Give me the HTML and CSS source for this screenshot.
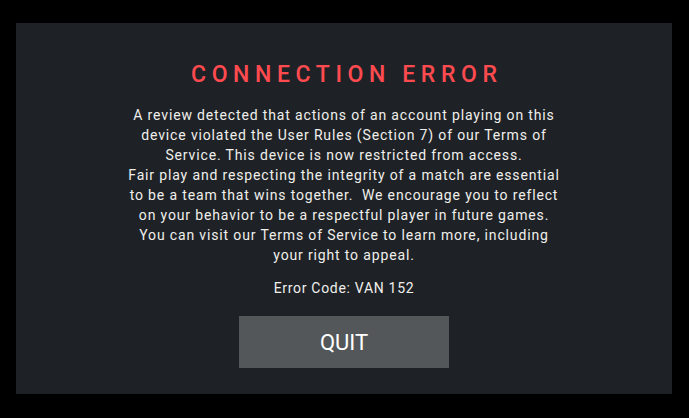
FILE: index.html
```html
<!DOCTYPE html>
<html>
<head>
<meta charset="utf-8">
<link rel="stylesheet" href="styles.css">
</head>
<body>
<main class="panel">
  <h1 class="title">CONNECTION ERROR</h1>
  <p class="message">A review detected that actions of an account playing on this<br>device violated the User Rules (Section 7) of our Terms of<br>Service. This device is now restricted from access.<br>Fair play and respecting the integrity of a match are essential<br>to be a team that wins together.&nbsp; We encourage you to reflect<br>on your behavior to be a respectful player in future games.<br>You can visit our Terms of Service to learn more, including<br>your right to appeal.</p>
  <p class="code">Error Code: VAN 152</p>
  <button class="quit">QUIT</button>
</main>
</body>
</html>
```
FILE: styles.css
```css
html, body {
  margin: 0;
  padding: 0;
  background: #000;
}
body {
  width: 689px;
  height: 418px;
  box-sizing: border-box;
  padding: 23px 17px 24px 16px;
  font-family: Roboto, "Liberation Sans", sans-serif;
}
.panel {
  height: 371px;
  background: #1e2226;
  display: flex;
  flex-direction: column;
  align-items: center;
  padding-top: 38px;
  box-sizing: border-box;
}
.title {
  margin: 0;
  font-size: 23px;
  line-height: 28px;
  font-weight: 500;
  letter-spacing: 5.6px;
  color: #ff4b50;
  margin-right: -5.6px;
}
.message {
  margin: 16px 0 0;
  font-size: 14px;
  line-height: 20px;
  letter-spacing: 0.85px;
  color: #f0efec;
  text-align: center;
}
.code {
  margin: 13px 0 0;
  font-size: 14px;
  line-height: 20px;
  letter-spacing: 0.7px;
  color: #f0efec;
}
.quit {
  margin-top: 18px;
  width: 210px;
  height: 52px;
  border: none;
  background: #53575a;
  color: #fff;
  font-family: Roboto, "Liberation Sans", sans-serif;
  font-size: 22px;
  padding: 0;
}
```
